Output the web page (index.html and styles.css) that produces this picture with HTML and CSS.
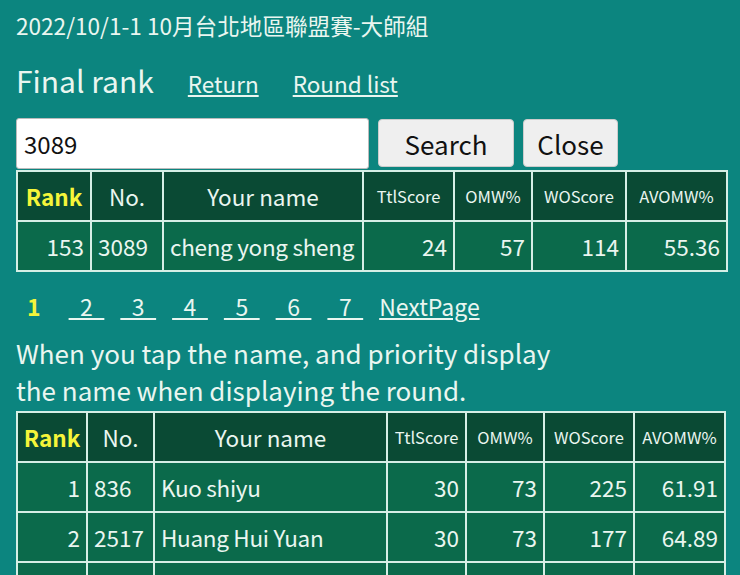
FILE: index.html
```html
<!DOCTYPE html>
<html>
<head>
<meta charset="utf-8">
<link rel="stylesheet" href="styles.css">
</head>
<body>
<div class="title">2022/10/1-1 10月台北地區聯盟賽-大師組</div>
<div class="headline">
  <span class="page-name">Final rank</span>
  <a class="nav-link" href="#">Return</a>
  <a class="nav-link" href="#">Round list</a>
</div>
<div class="search-row">
  <input class="search-input" type="text" value="3089">
  <button class="btn btn-search">Search</button>
  <button class="btn btn-close">Close</button>
</div>
<table class="rank-table t1">
  <colgroup>
    <col class="c-rank1"><col class="c-no1"><col class="c-name1"><col class="c-ttl1"><col class="c-omw1"><col class="c-wo1"><col class="c-avo1">
  </colgroup>
  <tr class="head">
    <th class="rank-h">Rank</th><th>No.</th><th>Your name</th><th class="small">TtlScore</th><th class="small">OMW%</th><th class="small">WOScore</th><th class="small">AVOMW%</th>
  </tr>
  <tr>
    <td class="num">153</td><td>3089</td><td class="name">cheng yong sheng</td><td class="num">24</td><td class="num">57</td><td class="num">114</td><td class="num">55.36</td>
  </tr>
</table>
<div class="pager">
  <span class="cur">1</span>
  <a href="#">&ensp;2&ensp;</a>
  <a href="#">&ensp;3&ensp;</a>
  <a href="#">&ensp;4&ensp;</a>
  <a href="#">&ensp;5&ensp;</a>
  <a href="#">&ensp;6&ensp;</a>
  <a href="#">&ensp;7&ensp;</a>
  <a href="#">NextPage</a>
</div>
<p class="note">When you tap the name, and priority display<br>the name when displaying the round.</p>
<table class="rank-table t2">
  <colgroup>
    <col class="c-rank2"><col class="c-no2"><col class="c-name2"><col class="c-ttl2"><col class="c-omw2"><col class="c-wo2"><col class="c-avo2">
  </colgroup>
  <tr class="head">
    <th class="rank-h">Rank</th><th>No.</th><th>Your name</th><th class="small">TtlScore</th><th class="small">OMW%</th><th class="small">WOScore</th><th class="small">AVOMW%</th>
  </tr>
  <tr>
    <td class="num">1</td><td>836</td><td class="name">Kuo shiyu</td><td class="num">30</td><td class="num">73</td><td class="num">225</td><td class="num">61.91</td>
  </tr>
  <tr>
    <td class="num">2</td><td>2517</td><td class="name">Huang Hui Yuan</td><td class="num">30</td><td class="num">73</td><td class="num">177</td><td class="num">64.89</td>
  </tr>
  <tr>
    <td>&nbsp;</td><td>&nbsp;</td><td>&nbsp;</td><td>&nbsp;</td><td>&nbsp;</td><td>&nbsp;</td><td>&nbsp;</td>
  </tr>
</table>
</body>
</html>
```
FILE: styles.css
```css
html, body {
  margin: 0;
  padding: 0;
  background: #0c857f;
  color: #eaf6f0;
  font-family: "Noto Sans CJK TC", "Noto Sans", sans-serif;
  overflow: hidden;
}
body {
  padding: 0 14px 0 16px;
}
.title {
  font-size: 22.6px;
  line-height: 32px;
  padding-top: 10px;
}
.headline {
  display: flex;
  align-items: baseline;
  margin-top: 16px;
  height: 40px;
}
.page-name {
  font-size: 30px;
  margin-right: 34px;
}
.nav-link {
  color: #eaf6f0;
  font-size: 22.5px;
  margin-right: 34px;
}
.search-row {
  display: flex;
  align-items: flex-start;
  margin-top: 20px;
  height: 52px;
}
.search-input {
  box-sizing: border-box;
  width: 353px;
  height: 51px;
  margin: 0;
  padding: 0 7px;
  font-family: inherit;
  font-size: 24px;
  color: #111;
  background: #fff;
  border: 1px solid #bbb;
  border-radius: 3px;
  outline: none;
}
.btn {
  box-sizing: border-box;
  height: 48px;
  margin: 1px 0 0 9px;
  padding: 0;
  font-family: inherit;
  font-size: 26px;
  color: #111;
  background: #efefef;
  border: 1px solid #ccc;
  border-radius: 4px;
}
.btn-search { width: 136px; }
.btn-close { width: 95px; margin-left: 9px; }
.rank-table {
  border-collapse: collapse;
  table-layout: fixed;
  border: 2px solid #d6efe6;
}
.t1 { width: 711px; }
.t2 { width: 709px; }
.rank-table th, .rank-table td {
  border: 2px solid #d6efe6;
  height: 48px;
  padding: 0 6px;
  font-size: 22.5px;
  font-weight: normal;
  white-space: nowrap;
  overflow: hidden;
}
.rank-table th {
  background: #0a4a34;
  text-align: center;
}
.rank-table th.small {
  font-size: 16.5px;
  padding: 0 3px;
}
.rank-table th.rank-h {
  color: #f5f53a;
  font-weight: bold;
  padding: 0 2px;
}
.rank-table td {
  background: #0b6a4b;
  text-align: left;
}
.rank-table td.name { letter-spacing: -0.3px; }
.rank-table td.num { text-align: right; }
.c-rank1 { width: 74px; }
.c-no1 { width: 72px; }
.c-name1 { width: 200px; }
.c-ttl1 { width: 91px; }
.c-omw1 { width: 78px; }
.c-wo1 { width: 94px; }
.c-avo1 { width: 101px; }
.c-rank2 { width: 70px; }
.c-no2 { width: 67px; }
.c-name2 { width: 233px; }
.c-ttl2 { width: 79px; }
.c-omw2 { width: 78px; }
.c-wo2 { width: 90px; }
.c-avo2 { width: 91px; }
.pager {
  display: flex;
  align-items: baseline;
  gap: 16px;
  margin-top: 17px;
  padding-left: 11px;
  font-size: 23px;
  line-height: 34px;
}
.pager a { color: #eaf6f0; }
.pager .cur {
  color: #f5f53a;
  font-weight: bold;
  margin-right: 12px;
}
.note {
  margin: 11px 0 3px;
  font-size: 26px;
  line-height: 37px;
}
```
